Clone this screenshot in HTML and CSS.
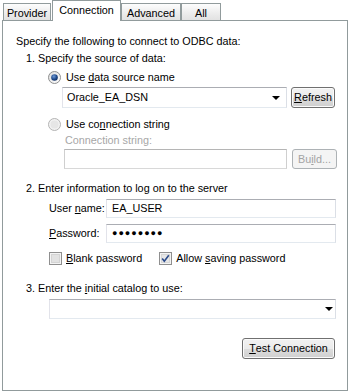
FILE: index.html
```html
<!DOCTYPE html>
<html>
<head>
<meta charset="utf-8">
<link rel="stylesheet" href="styles.css">
</head>
<body>
<div class="tabs">
  <div class="tab t-provider">Provider</div>
  <div class="tab active t-connection">Connection</div>
  <div class="tab t-advanced">Advanced</div>
  <div class="tab t-all">All</div>
</div>
<div class="panel">
  <div class="intro">Specify the following to connect to ODBC data:</div>
  <div class="step step1">1. Specify the source of data:</div>
  <div class="radio-row r1">
    <svg class="radio" width="13" height="13" viewBox="0 0 13 13">
      <defs>
        <linearGradient id="rg" x1="0" y1="0" x2="1" y2="1"><stop offset="0" stop-color="#dcdcdc"/><stop offset="1" stop-color="#ffffff"/></linearGradient>
        <radialGradient id="dot" cx="0.4" cy="0.35" r="0.7"><stop offset="0" stop-color="#6f9ad6"/><stop offset="0.6" stop-color="#1f4a8c"/><stop offset="1" stop-color="#0d2a5c"/></radialGradient>
      </defs>
      <circle cx="6.5" cy="6.5" r="6" fill="url(#rg)" stroke="#8e8f8f"/>
      <circle cx="6.5" cy="6.5" r="3.3" fill="url(#dot)"/>
    </svg>
    <span>Use <u>d</u>ata source name</span>
  </div>
  <div class="row dsn-row">
    <div class="combo dsn">Oracle_EA_DSN<span class="arrow"></span></div>
    <div class="btn refresh"><u>R</u>efresh</div>
  </div>
  <div class="radio-row r2">
    <svg class="radio" width="13" height="13" viewBox="0 0 13 13">
      <circle cx="6.5" cy="6.5" r="6" fill="#f2f2f2" stroke="#b3b3b3"/>
      <circle cx="6.5" cy="6.5" r="4" fill="#e6e6e6"/>
    </svg>
    <span>Use co<u>n</u>nection string</span>
  </div>
  <div class="disabled-label">Connection string:</div>
  <div class="row conn-row">
    <div class="input disabled-input"></div>
    <div class="btn build disabled">Bu<u>i</u>ld...</div>
  </div>
  <div class="step step2">2. Enter information to log on to the server</div>
  <div class="row login-row user-row">
    <div class="label">User <u>n</u>ame:</div>
    <div class="input login">EA_USER</div>
  </div>
  <div class="row login-row pass-row">
    <div class="label"><u>P</u>assword:</div>
    <div class="input login pass">&#9679;&#9679;&#9679;&#9679;&#9679;&#9679;&#9679;&#9679;</div>
  </div>
  <div class="row check-row">
    <div class="check blank">
      <svg width="13" height="13" viewBox="0 0 13 13">
        <rect x="0.5" y="0.5" width="12" height="12" fill="#f4f4f4" stroke="#8f8f8f"/>
        <rect x="2.5" y="2.5" width="8" height="8" fill="#e2e2e2" stroke="#d4d4d4"/>
      </svg>
      <span><u>B</u>lank password</span>
    </div>
    <div class="check allow">
      <svg width="13" height="13" viewBox="0 0 13 13">
        <rect x="0.5" y="0.5" width="12" height="12" fill="#f4f4f4" stroke="#8f8f8f"/>
        <rect x="2.5" y="2.5" width="8" height="8" fill="#e6e6e6" stroke="#d6d6d6"/>
        <path d="M3.2 6.6 L5.3 9.2 L9.8 3.2" fill="none" stroke="#2a4a8a" stroke-width="1.6"/>
      </svg>
      <span>Allow <u>s</u>aving password</span>
    </div>
  </div>
  <div class="step step3">3. Enter the <u>i</u>nitial catalog to use:</div>
  <div class="row cat-row">
    <div class="combo catalog"><span class="arrow"></span></div>
  </div>
  <div class="row test-row">
    <div class="btn test"><u>T</u>est Connection</div>
  </div>
</div>
</body>
</html>
```
FILE: styles.css
```css
html, body {
  margin: 0;
  padding: 0;
  background: #ffffff;
}
body {
  font-family: "Liberation Sans", Arial, sans-serif;
  font-size: 10.8px;
  color: #000;
  width: 349px;
  height: 392px;
  overflow: hidden;
}
u { text-decoration: underline; text-underline-offset: 1px; }

.tabs {
  display: flex;
  align-items: flex-end;
  height: 20px;
  padding-left: 3px;
}
.tab {
  box-sizing: border-box;
  height: 17px;
  border: 1px solid #919b9c;
  border-bottom: 0;
  background: linear-gradient(#fdfdfd, #e9e9e9 70%, #e2e2e2);
  text-align: center;
  line-height: 16px;
  padding-top: 1px;
}
.t-provider { width: 48px; }
.t-connection { width: 69px; margin-left: 1px; }
.t-advanced { width: 60px; }
.t-all { width: 40px; }
.tab.active {
  height: 21px;
  margin-bottom: -1px;
  background: #fff;
  position: relative;
  z-index: 1;
  line-height: 18px;
  padding-top: 0;
}

.panel {
  box-sizing: border-box;
  margin-left: 2px;
  width: 346px;
  height: 371px;
  border: 1px solid #919b9c;
  background: #fff;
  padding-top: 14px;
  display: flex;
  flex-direction: column;
  line-height: 13px;
}
.intro { margin-left: 13px; height: 13px; }
.step { margin-left: 23px; height: 13px; }
.step1 { margin-top: 4px; }
.step2 { margin-top: 13px; }
.step3 { margin-top: 17px; }

.radio-row {
  display: flex;
  align-items: center;
  height: 14px;
  margin-left: 45px;
  gap: 5px;
}
.radio { flex: none; }
.r1 { margin-top: 5px; }
.r2 { margin-top: 9px; }

.row { display: flex; align-items: center; }

.combo, .input {
  box-sizing: border-box;
  border: 1px solid;
  border-color: #abadb3 #dbdfe6 #e3e9ef #e2e3ea;
  background: #fff;
  position: relative;
  padding-left: 4px;
  display: flex;
  align-items: center;
}
.arrow {
  position: absolute;
  right: 6px;
  top: 50%;
  margin-top: -2px;
  width: 0;
  height: 0;
  border-left: 4px solid transparent;
  border-right: 4px solid transparent;
  border-top: 4px solid #000;
}
.dsn-row { margin-top: 3px; margin-left: 59px; }
.dsn { width: 225px; height: 21px; }
.btn {
  box-sizing: border-box;
  border: 1px solid #707070;
  border-radius: 3px;
  background: linear-gradient(#f2f2f2 0%, #ebebeb 50%, #dddddd 51%, #cfcfcf 100%);
  display: flex;
  align-items: center;
  justify-content: center;
  box-shadow: inset 0 0 0 1px #fbfbfb;
}
.refresh { width: 44px; height: 21px; margin-left: 4px; }

.disabled-label { margin-top: 3px; margin-left: 62px; color: #a7a7a7; height: 13px; }
.conn-row { margin-top: 2px; margin-left: 61px; }
.disabled-input { width: 223px; height: 20px; border-color: #b5b5b5 #cfcfcf #d8d8d8 #cfcfcf; }
.build {
  width: 45px;
  height: 20px;
  margin-left: 5px;
  color: #a3a3a3;
  border-color: #adb2b5;
  background: #f4f4f4;
  box-shadow: none;
}

.login-row { margin-left: 46px; }
.user-row { margin-top: 4px; }
.pass-row { margin-top: 6px; }
.label { width: 57px; }
.login { width: 230px; height: 19px; padding-left: 5px; }
.pass { font-size: 9px; letter-spacing: 1px; font-weight: bold; }

.check-row { margin-top: 9px; margin-left: 46px; height: 13px; }
.check { display: flex; align-items: center; gap: 4px; }
.check svg { flex: none; }
.allow { margin-left: 17px; }

.cat-row { margin-top: 4px; margin-left: 46px; }
.catalog { width: 287px; height: 20px; }
.catalog .arrow { right: 2px; }

.test-row { margin-top: 19px; justify-content: flex-end; padding-right: 12px; }
.test { width: 93px; height: 21px; }
```
